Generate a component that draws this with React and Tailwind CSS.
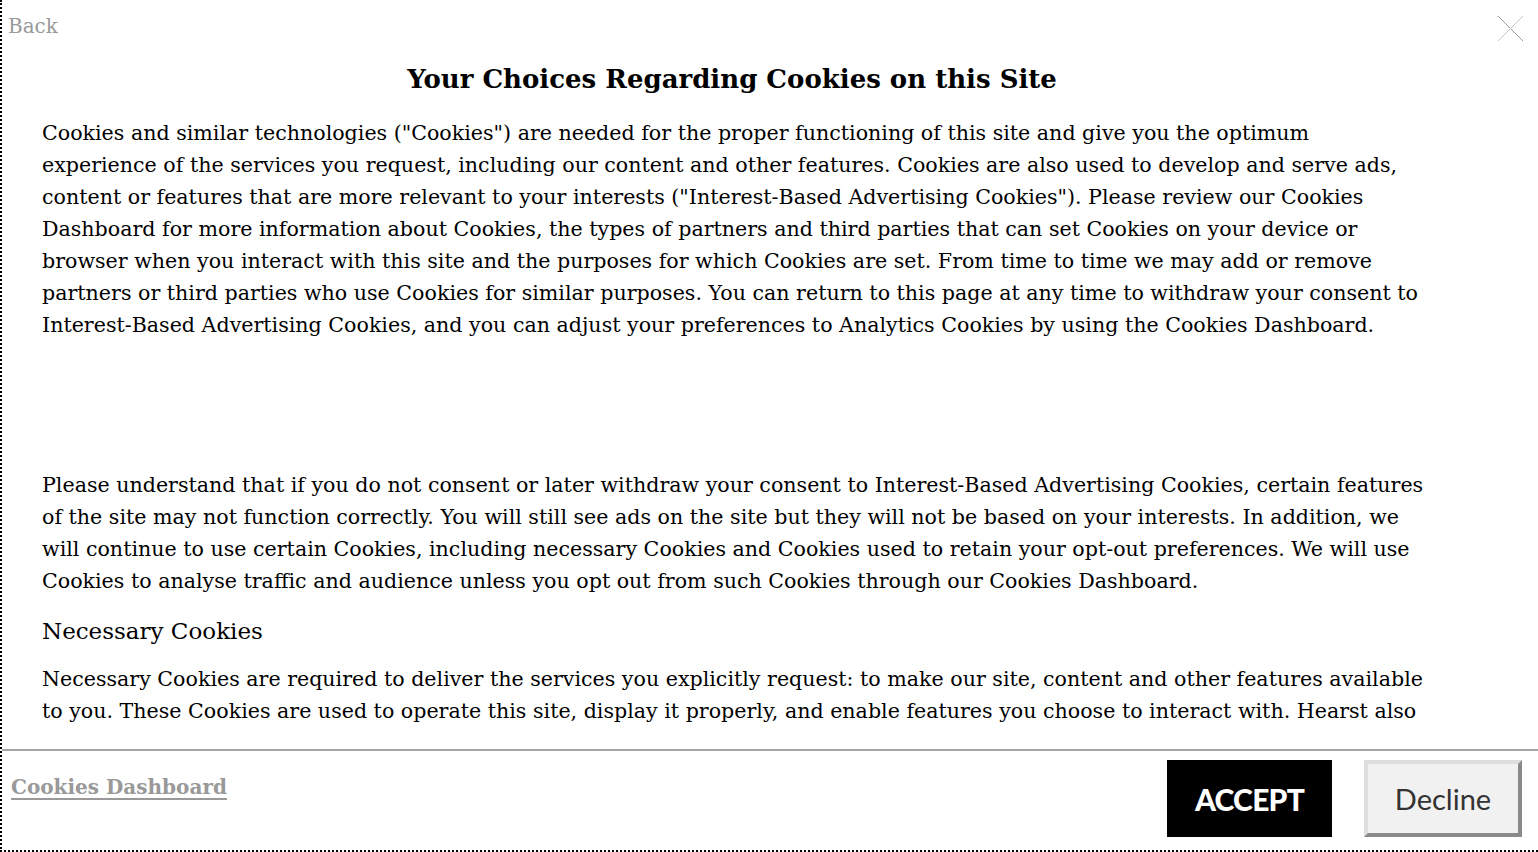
import React from "react";

const serif = { fontFamily: '"DejaVu Serif", serif' };
const sans = { fontFamily: 'Lato, "Liberation Sans", sans-serif' };

const App = () => {
  return (
    <div className="w-[1538px] h-[852px] bg-white overflow-hidden flex flex-col border-l-2 border-b-2 border-dotted border-black text-black" style={serif}>
      {/* SCROLL AREA */}
      <div className="relative h-[733px] shrink-0 overflow-hidden">
        <div className="px-[6px] pt-[10px] text-[20px] leading-[32px] text-[#999]">Back</div>
        <button className="absolute top-[15px] right-[14px] w-[27px] h-[27px]">
          <svg viewBox="0 0 27 27" className="w-[27px] h-[27px]">
            <line x1="1" y1="1" x2="26" y2="26" stroke="#9a9a9a" strokeWidth="1" />
            <line x1="26" y1="1" x2="1" y2="26" stroke="#c8c8c8" strokeWidth="1" />
          </svg>
        </button>

        <div className="ml-[40px] w-[1380px]">
          <h2 className="text-center font-bold text-[26px] leading-[40px] mt-[17px]">
            Your Choices Regarding Cookies on this Site
          </h2>

          <p className="mt-[18px] text-[20.6px] leading-[32px]">
            Cookies and similar technologies ("Cookies") are needed for the proper functioning of this site and give you the optimum experience of the services you request, including our content and other features. Cookies are also used to develop and serve ads, content or features that are more relevant to your interests ("Interest-Based Advertising Cookies"). Please review our Cookies Dashboard for more information about Cookies, the types of partners and third parties that can set Cookies on your device or browser when you interact with this site and the purposes for which Cookies are set. From time to time we may add or remove partners or third parties who use Cookies for similar purposes. You can return to this page at any time to withdraw your consent to Interest-Based Advertising Cookies, and you can adjust your preferences to Analytics Cookies by using the Cookies Dashboard.
          </p>

          <div className="h-[128px]" />

          <p className="w-[1400px] text-[20.6px] leading-[32px]">
            Please understand that if you do not consent or later withdraw your consent to Interest-Based Advertising Cookies, certain features of the site may not function correctly. You will still see ads on the site but they will not be based on your interests. In addition, we will continue to use certain Cookies, including necessary Cookies and Cookies used to retain your opt-out preferences. We will use Cookies to analyse traffic and audience unless you opt out from such Cookies through our Cookies Dashboard.
          </p>

          <h3 className="mt-[16px] text-[23px] leading-[36px]">Necessary Cookies</h3>

          <p className="mt-[14px] w-[1395px] text-[20.6px] leading-[32px]">
            Necessary Cookies are required to deliver the services you explicitly request: to make our site, content and other features available to you. These Cookies are used to operate this site, display it properly, and enable features you choose to interact with. Hearst also uses Necessary Cookies to help detect fraud and keep the site secure.
          </p>
        </div>
      </div>
      <div className="h-[16px] shrink-0" />

      {/* FOOTER */}
      <div className="flex-1 border-t-2 border-[#a5a5a5] flex items-start justify-between pl-[9px] pr-[16px] pt-[9px]">
        <a href="#" className="mt-[12px] text-[20px] leading-[30px] font-bold text-[#999] underline underline-offset-[4px] decoration-2">
          Cookies Dashboard
        </a>
        <div className="flex items-start gap-[32px]">
          <button className="w-[165px] h-[77px] bg-black text-white text-[30px] leading-none font-black tracking-tight" style={sans}>
            ACCEPT
          </button>
          <button
            className="w-[158px] h-[77px] bg-[#f1f1f1] text-[#333] text-[29px] leading-none border-[4px] border-t-[#dedede] border-l-[#dedede] border-r-[#8a8a8a] border-b-[#8a8a8a]"
            style={sans}
          >
            Decline
          </button>
        </div>
      </div>
    </div>
  );
};

export default App;
